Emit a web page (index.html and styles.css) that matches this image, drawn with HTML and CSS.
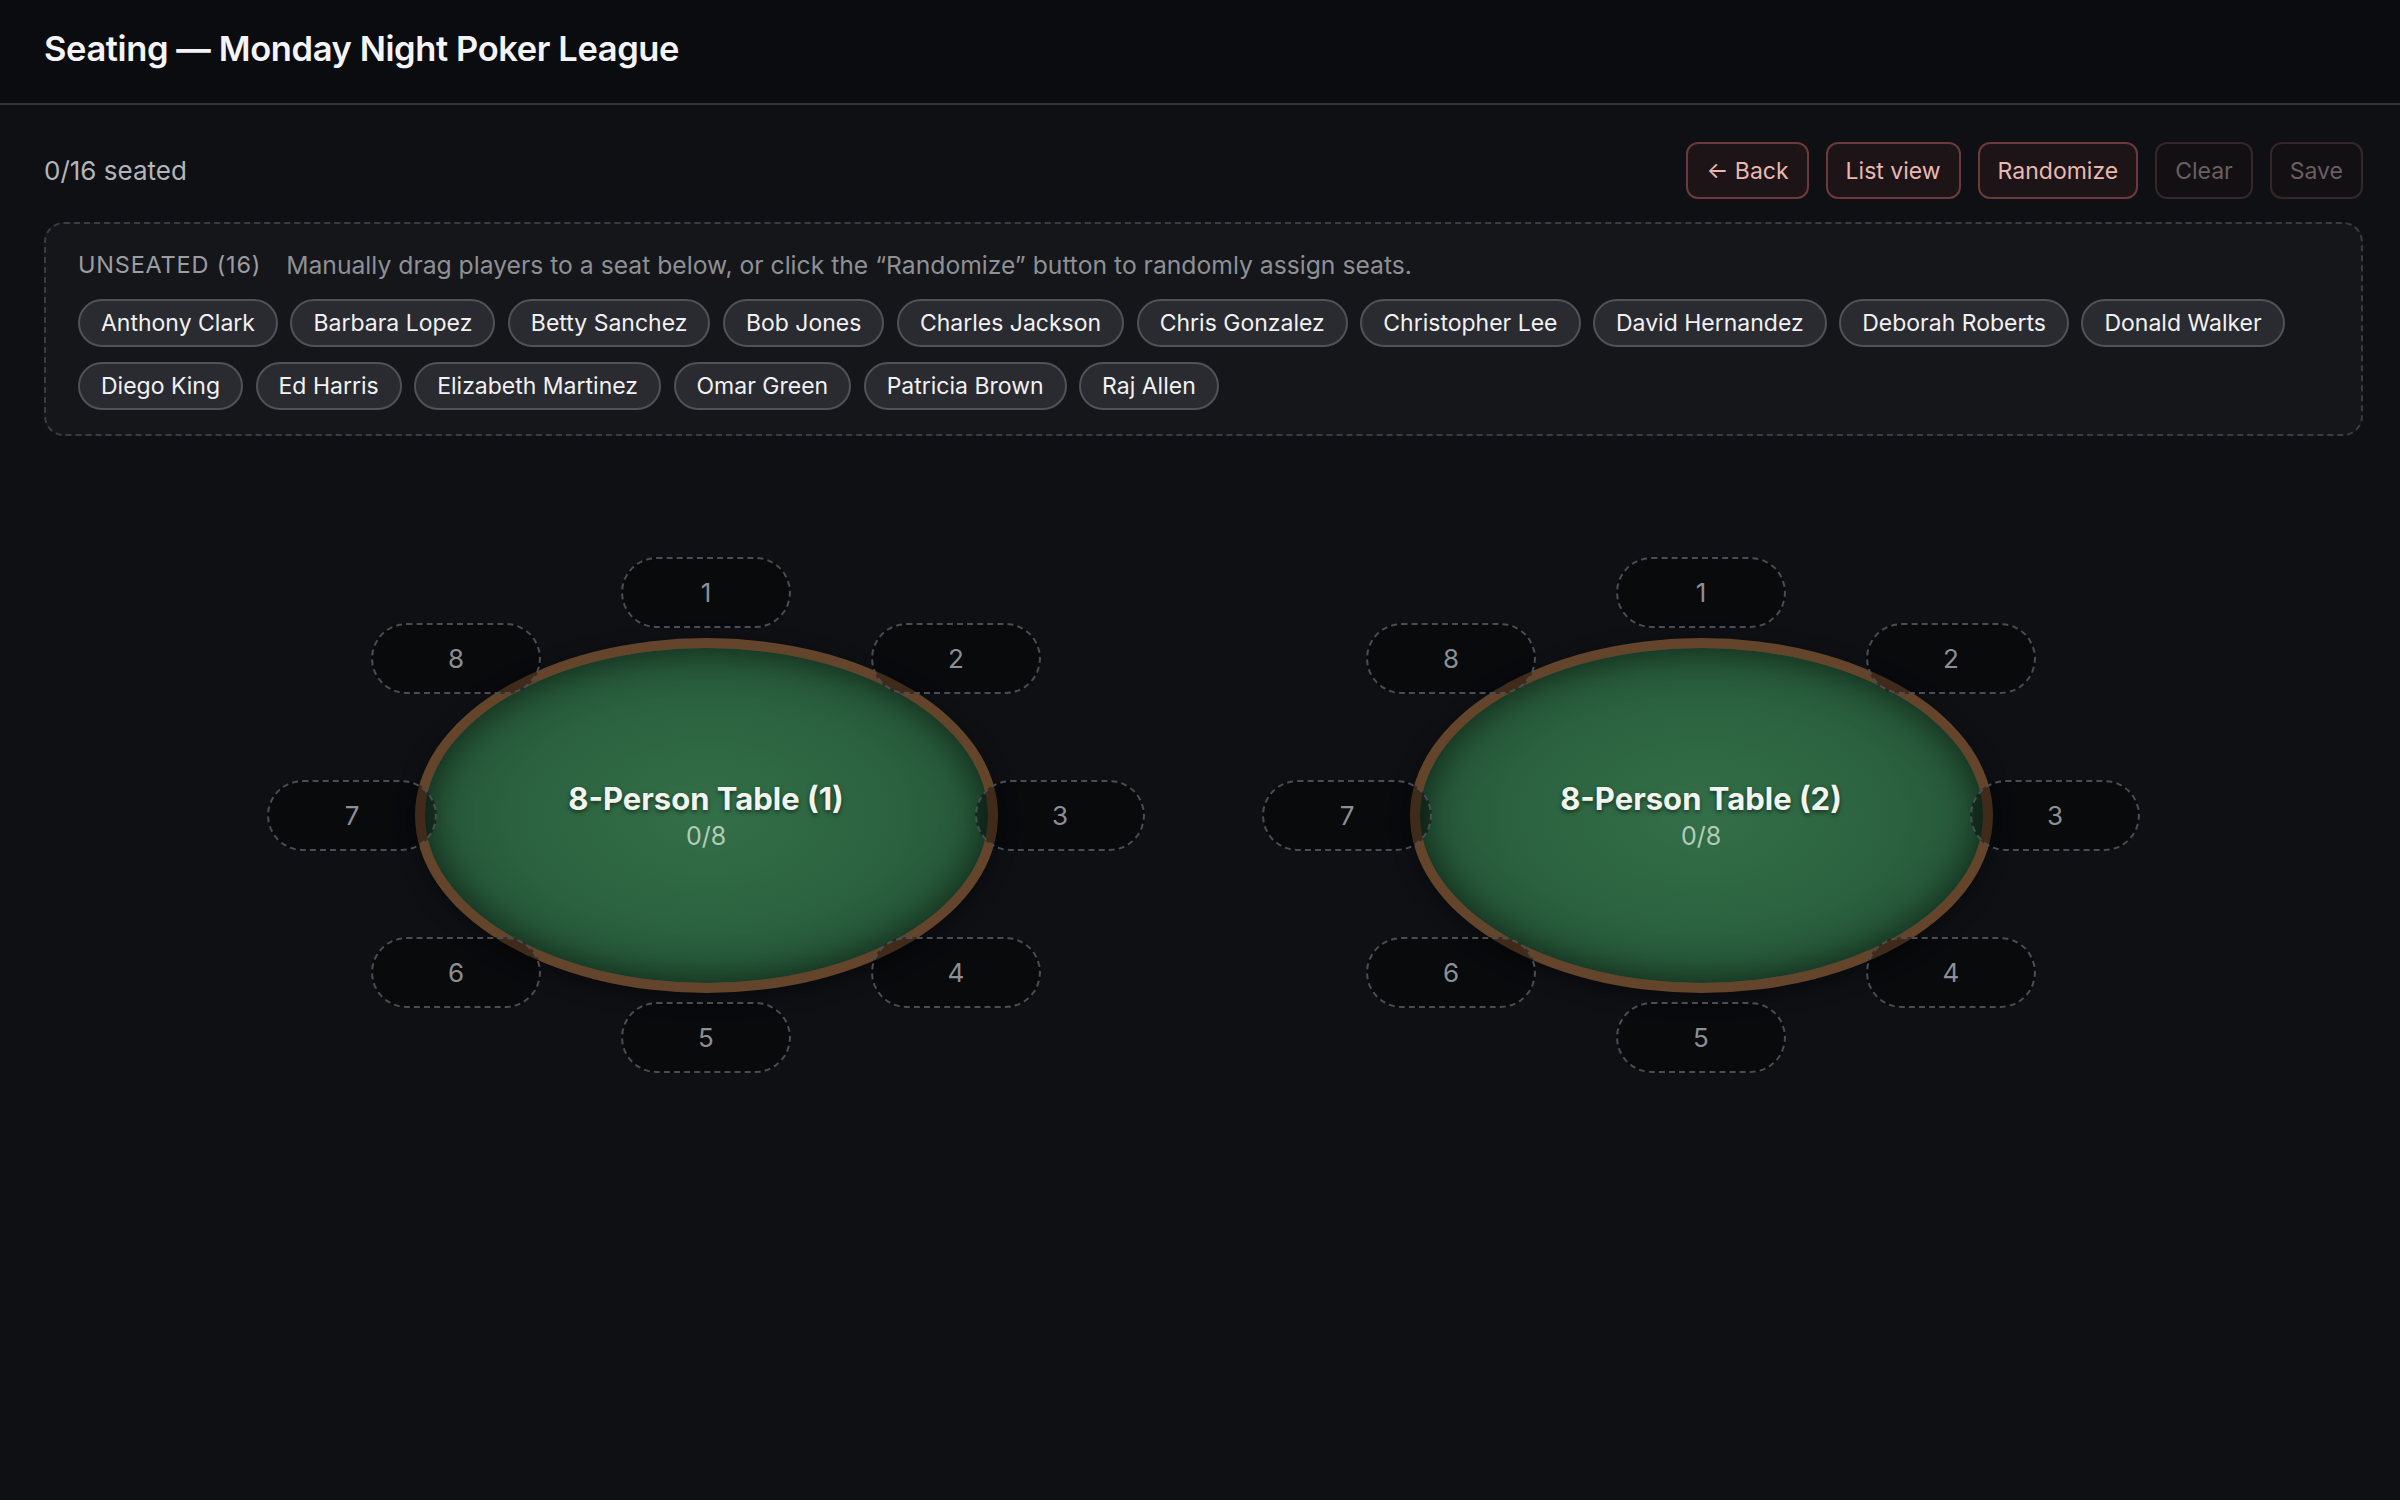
FILE: index.html
```html
<!DOCTYPE html>
<html lang="en">
<head>
    <meta charset="UTF-8">
    <meta name="viewport" content="width=device-width, initial-scale=1.0">
    <title>Seating</title>
    <link rel="stylesheet" href="styles.css">
</head>
<body>
    <header class="topbar">
        <h1>Seating — Monday Night Poker League</h1>
    </header>

    <main class="page">
        <div class="toolbar">
            <span class="seated-count">0/16 seated</span>
            <div class="actions">
                <button class="btn">← Back</button>
                <button class="btn">List view</button>
                <button class="btn">Randomize</button>
                <button class="btn" disabled>Clear</button>
                <button class="btn" disabled>Save</button>
            </div>
        </div>

        <section class="unseated">
            <div class="unseated-head">
                <span class="unseated-label">Unseated (16)</span>
                <span class="unseated-hint">Manually drag players to a seat below, or click the “Randomize” button to randomly assign seats.</span>
            </div>
            <div class="chips">
                <span class="chip">Anthony Clark</span>
                <span class="chip">Barbara Lopez</span>
                <span class="chip">Betty Sanchez</span>
                <span class="chip">Bob Jones</span>
                <span class="chip">Charles Jackson</span>
                <span class="chip">Chris Gonzalez</span>
                <span class="chip">Christopher Lee</span>
                <span class="chip">David Hernandez</span>
                <span class="chip">Deborah Roberts</span>
                <span class="chip">Donald Walker</span>
                <span class="chip">Diego King</span>
                <span class="chip">Ed Harris</span>
                <span class="chip">Elizabeth Martinez</span>
                <span class="chip">Omar Green</span>
                <span class="chip">Patricia Brown</span>
                <span class="chip">Raj Allen</span>
            </div>
        </section>

        <section class="tables">
            <div class="table-wrap">
                <div class="felt">
                    <div class="table-name">8-Person Table (1)</div>
                    <div class="table-count">0/8</div>
                </div>
                <div class="seat seat-1">1</div>
                <div class="seat seat-2">2</div>
                <div class="seat seat-3">3</div>
                <div class="seat seat-4">4</div>
                <div class="seat seat-5">5</div>
                <div class="seat seat-6">6</div>
                <div class="seat seat-7">7</div>
                <div class="seat seat-8">8</div>
            </div>

            <div class="table-wrap">
                <div class="felt">
                    <div class="table-name">8-Person Table (2)</div>
                    <div class="table-count">0/8</div>
                </div>
                <div class="seat seat-1">1</div>
                <div class="seat seat-2">2</div>
                <div class="seat seat-3">3</div>
                <div class="seat seat-4">4</div>
                <div class="seat seat-5">5</div>
                <div class="seat seat-6">6</div>
                <div class="seat seat-7">7</div>
                <div class="seat seat-8">8</div>
            </div>
        </section>
    </main>
</body>
</html>
```

FILE: styles.css
```css
* {
    box-sizing: border-box;
}
body {
    font-family: Inter, 'Noto Sans', sans-serif;
    margin: 0;
    padding: 0;
    min-height: 100vh;
    background-color: #0e1014;
    color: #e6e7ea;
}
.topbar {
    height: 105px;
    display: flex;
    align-items: center;
    padding: 0 44px 7px;
    background-color: #0b0c0f;
    border-bottom: 2px solid #303236;
}
.topbar h1 {
    margin: 0;
    font-size: 34.5px;
    font-weight: 600;
    color: #f4f4f6;
    letter-spacing: -0.4px;
}
.page {
    padding: 0 37px 0 44px;
}
.toolbar {
    margin-top: 37px;
    display: flex;
    align-items: center;
    justify-content: space-between;
}
.seated-count {
    font-size: 26px;
    color: #b3b5ba;
}
.actions {
    display: flex;
    gap: 17px;
}
.btn {
    height: 57px;
    padding: 0 18px;
    font-family: inherit;
    font-size: 23px;
    color: #eab8b1;
    background-color: #1c1416;
    border: 2px solid #6c3a3a;
    border-radius: 12px;
    cursor: pointer;
}
.btn:disabled {
    color: #6b5e60;
    background-color: #121013;
    border-color: #36262a;
    cursor: default;
}
.unseated {
    margin-top: 23px;
    padding: 25px 32px 24px;
    background-color: #15161a;
    border: 2px dashed #3a3c42;
    border-radius: 20px;
}
.unseated-head {
    display: flex;
    align-items: center;
    gap: 25px;
    line-height: 32px;
    margin-bottom: 18px;
}
.unseated-label {
    font-size: 23.5px;
    text-transform: uppercase;
    letter-spacing: 0.8px;
    color: #9b9da3;
}
.unseated-hint {
    font-size: 24.7px;
    color: #8e9096;
}
.chips {
    display: flex;
    flex-wrap: wrap;
    gap: 15px 12.5px;
}
.chip {
    height: 48px;
    display: inline-flex;
    align-items: center;
    padding: 0 21px;
    font-size: 23px;
    color: #f1f1f3;
    background-color: #2a2b30;
    border: 2px solid #505258;
    border-radius: 24px;
}
.tables {
    margin-top: 121px;
    display: flex;
    justify-content: center;
    gap: 117px;
}
.table-wrap {
    position: relative;
    width: 878px;
    height: 516px;
    display: flex;
    align-items: center;
    justify-content: center;
}
.felt {
    width: 583px;
    height: 355px;
    border-radius: 50%;
    border: 10px solid #64442a;
    background: radial-gradient(ellipse at center, #336f48 0%, #2b613f 50%, #1d472d 100%);
    box-shadow: inset 0 0 38px rgba(0, 0, 0, 0.6), 0 6px 20px rgba(0, 0, 0, 0.4);
    display: flex;
    flex-direction: column;
    align-items: center;
    justify-content: center;
    gap: 4px;
}
.table-name {
    font-size: 31px;
    font-weight: 700;
    color: #f1f5ee;
    text-shadow: 0 2px 4px rgba(0, 0, 0, 0.55);
}
.table-count {
    font-size: 25px;
    color: rgba(222, 236, 224, 0.75);
}
.seat {
    position: absolute;
    width: 170px;
    height: 71px;
    display: flex;
    align-items: center;
    justify-content: center;
    font-size: 26px;
    color: #8c8f95;
    background-color: rgba(0, 0, 0, 0.36);
    border: 2px dashed #4a4d54;
    border-radius: 36px;
}
.seat-1 { left: 354px; top: 0; }
.seat-2 { left: 604px; top: 66px; }
.seat-3 { left: 708px; top: 223px; }
.seat-4 { left: 604px; top: 380px; }
.seat-5 { left: 354px; top: 445px; }
.seat-6 { left: 104px; top: 380px; }
.seat-7 { left: 0; top: 223px; }
.seat-8 { left: 104px; top: 66px; }
```
